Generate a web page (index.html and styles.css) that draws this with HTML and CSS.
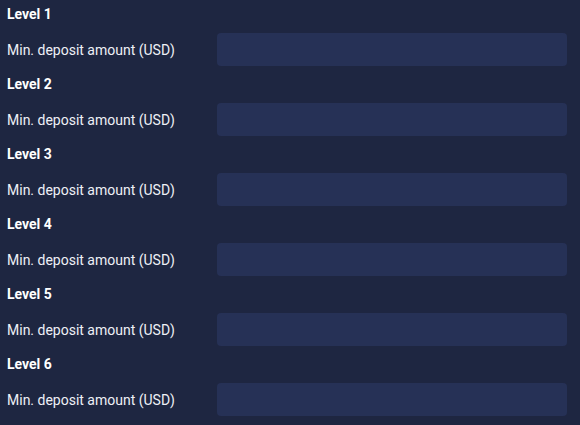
FILE: index.html
```html
<!DOCTYPE html>
<html lang="en">
<head>
  <meta charset="UTF-8" />
  <title>Deposit levels</title>
  <link rel="stylesheet" href="styles.css">
</head>
<body>
  <div class="levels">
    <div class="level">
      <h4>Level 1</h4>
      <div class="field-row">
        <label for="lvl1">Min. deposit amount (USD)</label>
        <input id="lvl1" type="text">
      </div>
    </div>
    <div class="level">
      <h4>Level 2</h4>
      <div class="field-row">
        <label for="lvl2">Min. deposit amount (USD)</label>
        <input id="lvl2" type="text">
      </div>
    </div>
    <div class="level">
      <h4>Level 3</h4>
      <div class="field-row">
        <label for="lvl3">Min. deposit amount (USD)</label>
        <input id="lvl3" type="text">
      </div>
    </div>
    <div class="level">
      <h4>Level 4</h4>
      <div class="field-row">
        <label for="lvl4">Min. deposit amount (USD)</label>
        <input id="lvl4" type="text">
      </div>
    </div>
    <div class="level">
      <h4>Level 5</h4>
      <div class="field-row">
        <label for="lvl5">Min. deposit amount (USD)</label>
        <input id="lvl5" type="text">
      </div>
    </div>
    <div class="level">
      <h4>Level 6</h4>
      <div class="field-row">
        <label for="lvl6">Min. deposit amount (USD)</label>
        <input id="lvl6" type="text">
      </div>
    </div>
  </div>
</body>
</html>
```

FILE: styles.css
```css
:root {
  --bg-color: #1e2641;
  --input-bg: #263156;
  --text-color: #eef0f6;
}

body {
  margin: 0;
  padding: 0 0 9px 7px;
  background-color: var(--bg-color);
  color: var(--text-color);
  font-family: Roboto, 'Liberation Sans', sans-serif;
}

.levels {
  display: flex;
  flex-direction: column;
  gap: 4px;
}

.level h4 {
  margin: 0 0 5px 0;
  font-size: 14px;
  font-weight: bold;
  line-height: 28px;
  color: #ffffff;
}

.field-row {
  display: grid;
  grid-template-columns: 210px 350px;
  align-items: center;
}

.field-row label {
  font-size: 14px;
}

.field-row input {
  height: 33px;
  box-sizing: border-box;
  border: none;
  border-radius: 4px;
  background-color: var(--input-bg);
  color: var(--text-color);
  padding: 0 10px;
  font-size: 14px;
}
```
